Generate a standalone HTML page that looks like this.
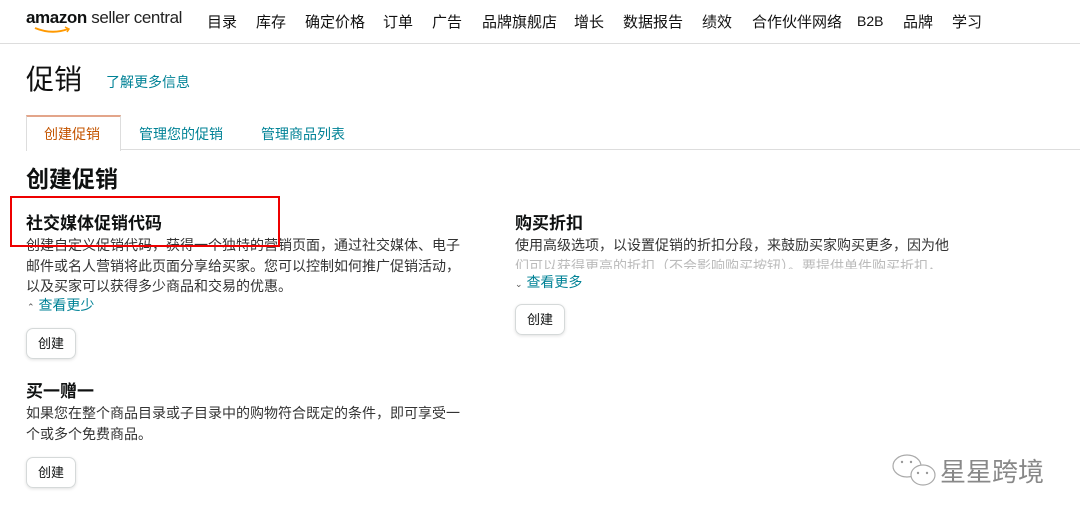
<!DOCTYPE html>
<html><head><meta charset="utf-8"><style>
*{margin:0;padding:0;box-sizing:border-box}
body{width:1080px;height:516px;background:#fff;font-family:"Liberation Sans","Noto Sans CJK SC",sans-serif;color:#0f1111;position:relative;overflow:hidden}
.a{position:absolute;white-space:nowrap}
.nav{font-size:15px;color:#111;top:11px}
.t{color:#008296}
.p{font-size:14px;line-height:20.5px;color:#333}
.btn{position:absolute;border:1px solid #d5d9d9;border-radius:7px;box-shadow:0 1px 3px rgba(0,0,0,.12);font-size:13px;text-align:center;line-height:29px;width:50px;height:31px;color:#0f1111}
</style></head><body>
<div class="a" style="left:0;top:43px;width:1080px;height:1px;background:#ddd"></div>
<div class="a" style="left:26px;top:8px;font-size:17px;letter-spacing:-0.4px"><b style="font-weight:bold">amazon</b> <span style="color:#222">seller central</span></div>
<svg class="a" style="left:34px;top:26px" width="40" height="8"><path d="M1 2 Q18 9 34 3" stroke="#f90" stroke-width="2" fill="none"/><path d="M31 1 L35 3 L33 6" stroke="#f90" stroke-width="1.5" fill="none"/></svg>
<div class="a nav" style="left:207px">目录</div>
<div class="a nav" style="left:256px">库存</div>
<div class="a nav" style="left:305px">确定价格</div>
<div class="a nav" style="left:383px">订单</div>
<div class="a nav" style="left:432px">广告</div>
<div class="a nav" style="left:482px">品牌旗舰店</div>
<div class="a nav" style="left:574px">增长</div>
<div class="a nav" style="left:623px">数据报告</div>
<div class="a nav" style="left:702px">绩效</div>
<div class="a nav" style="left:752px">合作伙伴网络</div>
<div class="a nav" style="left:857px;top:13px;font-size:14px">B2B</div>
<div class="a nav" style="left:903px">品牌</div>
<div class="a nav" style="left:952px">学习</div>

<div class="a" style="left:26px;top:58px;font-size:28px;color:#111">促销</div>
<div class="a t" style="left:106px;top:72px;font-size:14px">了解更多信息</div>

<div class="a" style="left:26px;top:149px;width:1054px;height:1px;background:#ddd"></div>
<div class="a" style="left:26px;top:115px;width:95px;height:36px;background:#fff;border:1px solid #ddd;border-bottom:none;border-top:2px solid #e3a58a"></div>
<div class="a" style="left:44px;top:124px;font-size:14px;color:#c45500">创建促销</div>
<div class="a t" style="left:139px;top:124px;font-size:14px">管理您的促销</div>
<div class="a t" style="left:261px;top:124px;font-size:14px">管理商品列表</div>

<div class="a" style="left:26px;top:160px;font-size:23px;font-weight:bold">创建促销</div>

<div class="a" style="left:26px;top:209px;font-size:17px;font-weight:bold">社交媒体促销代码</div>
<div class="a p" style="left:26px;top:235px">创建自定义促销代码，获得一个独特的营销页面，通过社交媒体、电子<br>邮件或名人营销将此页面分享给买家。您可以控制如何推广促销活动，<br>以及买家可以获得多少商品和交易的优惠。</div>
<div class="a" style="left:10px;top:196px;width:270px;height:51px;border:2px solid #e00"></div>
<div class="a" style="left:27px;top:295px;font-size:14px"><span style="font-size:9px;color:#555">⌃</span> <span class="t">查看更少</span></div>
<div class="btn" style="left:26px;top:328px">创建</div>

<div class="a" style="left:26px;top:377px;font-size:17px;font-weight:bold">买一赠一</div>
<div class="a p" style="left:26px;top:403px">如果您在整个商品目录或子目录中的购物符合既定的条件，即可享受一<br>个或多个免费商品。</div>
<div class="btn" style="left:26px;top:457px">创建</div>

<div class="a" style="left:515px;top:209px;font-size:17px;font-weight:bold">购买折扣</div>
<div class="a p" style="left:515px;top:235px">使用高级选项，以设置促销的折扣分段，来鼓励买家购买更多，因为他</div>
<div class="a p" style="left:515px;top:256px;height:13px;overflow:hidden;color:#bbb">们可以获得更高的折扣（不会影响购买按钮）。要提供单件购买折扣，</div>
<div class="a" style="left:515px;top:272px;font-size:14px"><span style="font-size:9px;color:#555">⌄</span> <span class="t">查看更多</span></div>
<div class="btn" style="left:515px;top:304px">创建</div>

<svg class="a" style="left:890px;top:452px" width="50" height="36"><ellipse cx="17" cy="14" rx="14" ry="11" fill="#fff" stroke="#aaa" stroke-width="1.2"/><ellipse cx="33" cy="23" rx="12" ry="10" fill="#fff" stroke="#aaa" stroke-width="1.2"/><circle cx="28" cy="21" r="1.2" fill="#999"/><circle cx="37" cy="21" r="1.2" fill="#999"/><circle cx="12" cy="10" r="1.2" fill="#999"/><circle cx="21" cy="10" r="1.2" fill="#999"/></svg>
<div class="a" style="left:940px;top:452px;font-size:26px;color:#888">星星跨境</div>
</body></html>
